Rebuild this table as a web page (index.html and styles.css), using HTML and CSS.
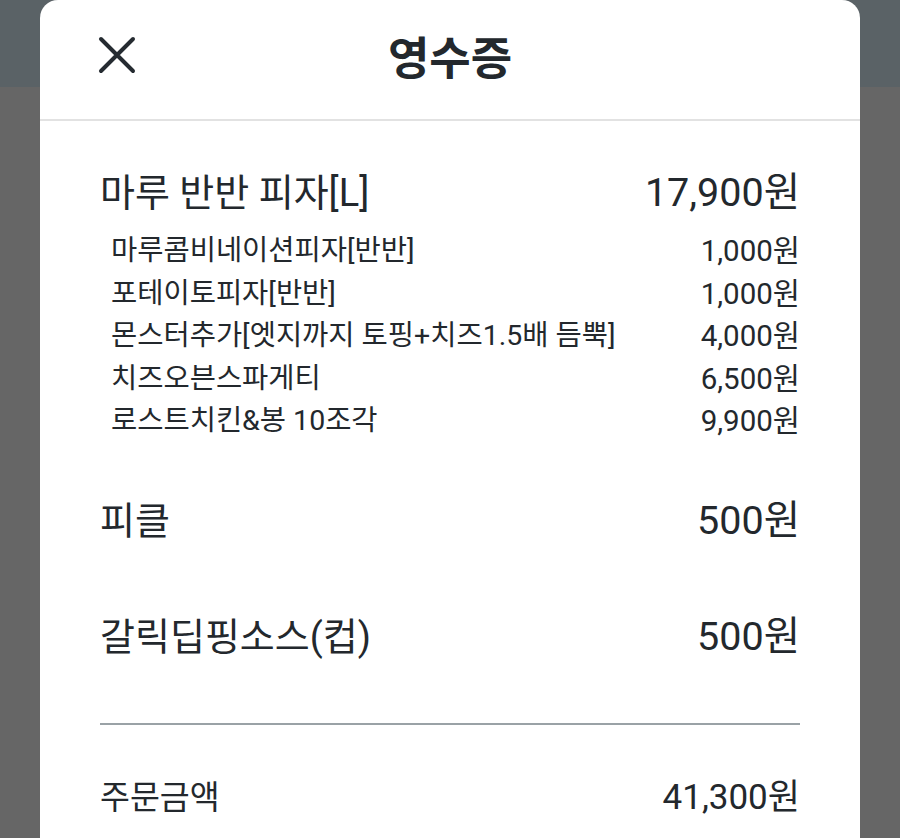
FILE: index.html
```html
<!DOCTYPE html>
<html lang="ko">
<head>
<meta charset="utf-8">
<title>영수증</title>
<link rel="stylesheet" href="styles.css">
</head>
<body>
<div class="modal">
  <header class="modal-header">
    <button class="close-btn" aria-label="닫기">
      <svg width="38" height="38" viewBox="0 0 38 38"><path d="M3 3 L35 35 M35 3 L3 35" stroke="#252b31" stroke-width="4" stroke-linecap="round" fill="none"/></svg>
    </button>
    <h1 class="title">영수증</h1>
  </header>
  <div class="modal-body">
    <section class="group group-options">
      <div class="row main"><span class="label">마루 반반 피자[L]</span><span class="price">17,900원</span></div>
      <ul class="options">
        <li class="row sub"><span class="label">마루콤비네이션피자[반반]</span><span class="price">1,000원</span></li>
        <li class="row sub"><span class="label">포테이토피자[반반]</span><span class="price">1,000원</span></li>
        <li class="row sub"><span class="label">몬스터추가[엣지까지 토핑+치즈1.5배 듬뿍]</span><span class="price">4,000원</span></li>
        <li class="row sub"><span class="label">치즈오븐스파게티</span><span class="price">6,500원</span></li>
        <li class="row sub"><span class="label">로스트치킨&amp;봉 10조각</span><span class="price">9,900원</span></li>
      </ul>
    </section>
    <section class="group">
      <div class="row main"><span class="label">피클</span><span class="price">500원</span></div>
    </section>
    <section class="group">
      <div class="row main"><span class="label">갈릭딥핑소스(컵)</span><span class="price">500원</span></div>
    </section>
    <hr class="divider">
    <div class="row total"><span class="label">주문금액</span><span class="price">41,300원</span></div>
  </div>
</div>
</body>
</html>
```
FILE: styles.css
```css
html, body {
  margin: 0;
  padding: 0;
}
body {
  height: 838px;
  overflow: hidden;
  background: linear-gradient(#5a6266 0, #5a6266 87px, #666666 87px, #666666 100%);
  font-family: Roboto, "Noto Sans CJK KR", sans-serif;
  color: #23282d;
}
.modal {
  margin: 0 40px;
  height: 838px;
  background: #ffffff;
  border-radius: 18px 18px 0 0;
}
.modal-header {
  position: relative;
  height: 119px;
  border-bottom: 2px solid #e2e2e2;
  display: flex;
  align-items: center;
  justify-content: center;
}
.close-btn {
  position: absolute;
  left: 58px;
  top: 36px;
  padding: 0;
  border: 0;
  background: none;
  width: 38px;
  height: 38px;
  display: block;
}
.close-btn svg { display: block; }
.title {
  margin: 0;
  font-size: 45px;
  font-weight: 700;
  line-height: 1;
  color: #23282d;
}
.modal-body {
  padding: 49px 60px 0;
}
.group {
  margin-bottom: 70px;
}
.group-options {
  margin-bottom: 55px;
}
.row {
  display: flex;
  justify-content: space-between;
  align-items: center;
}
.main {
  font-size: 38px;
  line-height: 46px;
}
.main .price {
  font-size: 39.5px;
}
.options {
  list-style: none;
  margin: 14px 0 0;
  padding: 0 0 0 11px;
}
.sub {
  font-size: 28.5px;
  line-height: 42.5px;
}
.sub .price {
  font-size: 29.5px;
}
.divider {
  margin: -7px 0 0;
  border: 0;
  height: 2px;
  background: #9aa2a6;
}
.total {
  margin-top: 53px;
  font-size: 32.5px;
  line-height: 40px;
}
.total .price {
  font-size: 35px;
}
```
